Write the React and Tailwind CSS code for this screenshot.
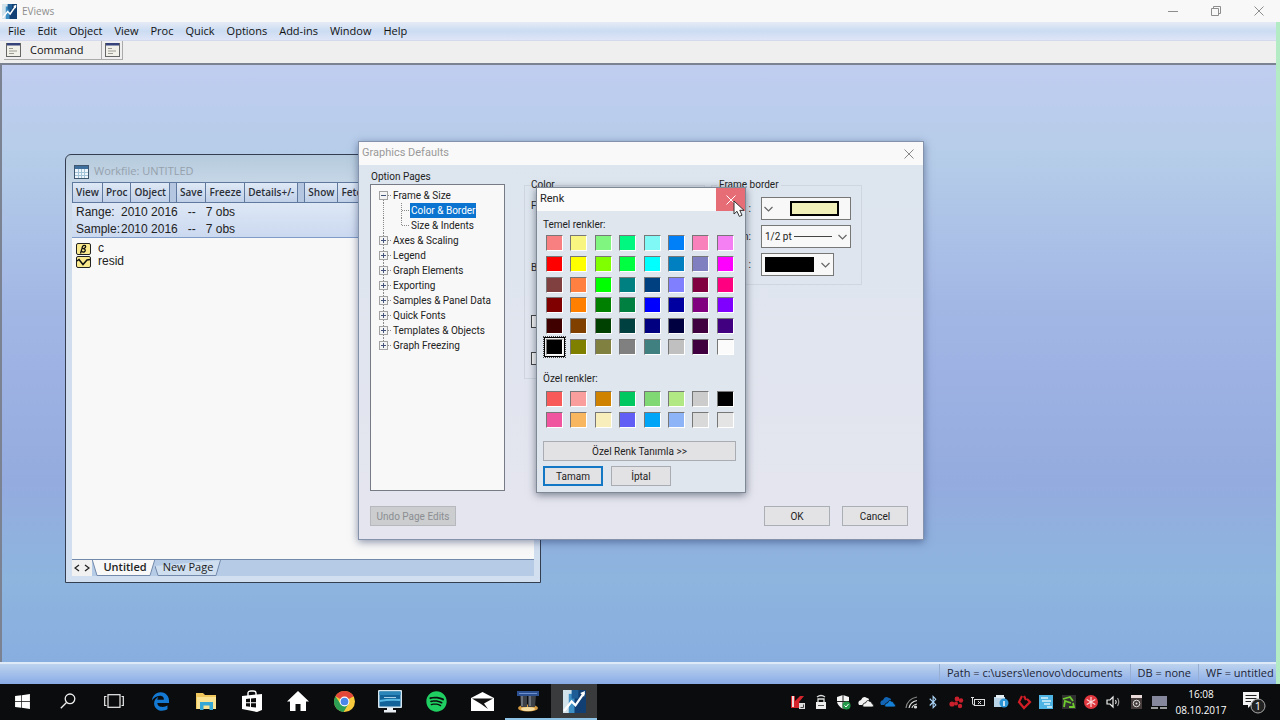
import React, { useState } from 'react';
import { FaWindows, FaEdgeLegacy, FaSpotify, FaBluetoothB } from 'react-icons/fa6';

const MENU = ['File', 'Edit', 'Object', 'View', 'Proc', 'Quick', 'Options', 'Add-ins', 'Window', 'Help'];

const TOOLBAR = [
  ['View', 'Proc', 'Object'],
  ['Save', 'Freeze', 'Details+/-'],
  ['Show', 'Fetch'],
];

const PAGES = [
  { label: 'Frame & Size', open: true, children: ['Color & Border', 'Size & Indents'] },
  { label: 'Axes & Scaling' },
  { label: 'Legend' },
  { label: 'Graph Elements' },
  { label: 'Exporting' },
  { label: 'Samples & Panel Data' },
  { label: 'Quick Fonts' },
  { label: 'Templates & Objects' },
  { label: 'Graph Freezing' },
];

const BASIC_COLORS = [
  '#f98080', '#f8f680', '#80f680', '#00f780', '#80f8f6', '#0080f8', '#f880bb', '#f480f4',
  '#ff0000', '#ffff00', '#80ff00', '#00ff40', '#00ffff', '#0080c0', '#8080c0', '#ff00ff',
  '#804040', '#ff8040', '#00ff00', '#008080', '#004080', '#8080ff', '#800040', '#ff0080',
  '#800000', '#ff8000', '#008000', '#008040', '#0000ff', '#0000a0', '#800080', '#8000ff',
  '#400000', '#804000', '#004000', '#004040', '#000080', '#000040', '#400040', '#400080',
  '#000000', '#808000', '#808040', '#808080', '#408080', '#c0c0c0', '#400040', '#fbfbfb',
];

const CUSTOM_COLORS = [
  '#f85a5a', '#f99d9d', '#cf8100', '#00c860', '#7fd874', '#b2e884', '#cccccc', '#000000',
  '#f0559f', '#f8b75e', '#f8eebb', '#605ef5', '#00a5f8', '#8db4f6', '#d9d9d9', '#e4e4e4',
];

function EViewsLogo({ size }) {
  return (
    <svg width={size} height={size} viewBox="0 0 24 24">
      <rect width="24" height="24" fill="#d3e3ec" />
      <rect x="6" y="4" width="8" height="20" fill="#3d8fc4" />
      <rect x="12" width="12" height="24" fill="#123f73" />
      <rect x="9" y="0" width="7" height="9" fill="#1d5c94" />
      <path d="M1 22 L9 12 L13 16 L22 3" fill="none" stroke="#fff" strokeWidth="2.4" />
      <path d="M18 3 L23 1 L22 7 Z" fill="#fff" />
    </svg>
  );
}

function CloseIcon({ className }) {
  return (
    <svg className={className} width="10" height="10" viewBox="0 0 10 10" fill="none" stroke="currentColor">
      <path d="M0.5 0.5 L9.5 9.5 M9.5 0.5 L0.5 9.5" />
    </svg>
  );
}

function CommandIcon() {
  return (
    <svg width="15" height="14" viewBox="0 0 15 14">
      <rect x="0.5" y="0.5" width="14" height="13" fill="#f1f1ea" stroke="#666" />
      <rect x="1" y="0" width="13" height="2.5" fill="#35437a" />
      <path d="M3 5.5 H7 M3 8 H11 M3 10.5 H8" stroke="#9c9c94" />
    </svg>
  );
}

function TitleBar() {
  return (
    <header className="flex h-[22px] items-center justify-between bg-[#f8f8f8] pl-[2px] text-[#8d8d8d]">
      <div className="flex items-center gap-[5px]">
        <EViewsLogo size={15} />
        <h1 className="text-[10px]">EViews</h1>
      </div>
      <div className="flex">
        <button aria-label="Minimize" className="grid w-[43px] place-items-center">
          <svg width="10" height="10" viewBox="0 0 10 10" stroke="currentColor"><path d="M0 5.5 H10" /></svg>
        </button>
        <button aria-label="Restore" className="grid w-[43px] place-items-center">
          <svg width="10" height="10" viewBox="0 0 10 10" fill="none" stroke="currentColor">
            <path d="M0.5 2.5 H7.5 V9.5 H0.5 Z M2.5 2.5 V0.5 H9.5 V7.5 H7.5" />
          </svg>
        </button>
        <button aria-label="Close" className="grid w-[43px] place-items-center"><CloseIcon /></button>
      </div>
    </header>
  );
}

function ItemIcon({ kind }) {
  return (
    <svg width="15" height="12" viewBox="0 0 15 12">
      <rect x="0.5" y="0.5" width="14" height="11" rx="1.5" fill="#fbe98e" stroke="#222" />
      {kind === 'coef' ? (
        <path d="M4.5 10.5 L6.5 3.5 Q7.5 2 9.3 2.6 Q10.5 4.8 7.5 5.6 Q10.5 6.6 8.6 8.6 Q7 9.6 5.8 8.4" fill="none" stroke="#111" strokeWidth="1.3" />
      ) : (
        <path d="M1 5 L3 3.5 L7 8.5 L11 4 L14 3.5" fill="none" stroke="#111" strokeWidth="1.5" />
      )}
    </svg>
  );
}

function Workfile() {
  return (
    <section className="absolute top-[90px] left-[65px] flex h-[429px] w-[476px] flex-col rounded-t-[6px] border border-[#333f50] bg-[#d0ddf0] bg-linear-to-b from-[#b5cbdd] via-[#cfdcec] via-10% to-[#d2dff1] px-[6px] pb-[6px]">
      <header className="flex h-[27px] items-center gap-[5px] px-[2px] pt-[6px]">
        <svg width="15" height="14" viewBox="0 0 15 14">
          <rect x="0.5" y="0.5" width="14" height="13" fill="#eef6fb" stroke="#3f5870" />
          <rect x="1" y="1" width="13" height="3" fill="#3f6f9c" />
          <path d="M4.5 4 V13 M7.5 4 V13 M10.5 4 V13 M1 7.5 H14 M1 10.5 H14" stroke="#a3c3d9" />
        </svg>
        <h2 className="text-[11px] text-[#96a1ac]">Workfile: UNTITLED</h2>
      </header>
      <div className="flex h-[21px] gap-[6px] overflow-hidden border-y border-[#5f789e] bg-[#b4c6e0]">
        {TOOLBAR.map((group) => (
          <div key={group[0]} className="flex divide-x divide-[#5f789e] border-x border-[#5f789e] bg-linear-to-b from-[#dfe9f6] to-[#c0d0e8]">
            {group.map((name) => (
              <button key={name} className="px-[3px] text-[10px] font-semibold text-[#2b2f38]">{name}</button>
            ))}
          </div>
        ))}
      </div>
      <dl className="grid h-[35px] grid-cols-[45px_1fr] border-b border-[#7f9cc8] bg-linear-to-b from-[#dde7f5] to-[#cbd9f0] pt-px pl-1 font-['Liberation_Sans',sans-serif] text-[12px] leading-[16px] whitespace-pre text-[#222]">
        <dt>Range:</dt>
        <dd>2010 2016   --   7 obs</dd>
        <dt>Sample:</dt>
        <dd>2010 2016   --   7 obs</dd>
      </dl>
      <ul className="flex-1 bg-[#f8f8f8] pt-[4px] pl-1 font-['Liberation_Sans',sans-serif] text-[12px] leading-[13px] text-[#222]">
        <li className="flex items-center gap-[7px]"><ItemIcon kind="coef" />c</li>
        <li className="flex items-center gap-[7px]"><ItemIcon kind="series" />resid</li>
      </ul>
      <nav className="flex h-[17px] border-t border-[#7389ab] bg-[#b6cce6] text-[11px] leading-[14px] text-[#222]">
        <div className="flex w-[20px] items-center justify-around bg-[#f1f1f1]">
          <button aria-label="Previous page">
            <svg width="6" height="8" viewBox="0 0 6 8" fill="none" stroke="#222" strokeWidth="1.3"><path d="M5 1 L1 4 L5 7" /></svg>
          </button>
          <button aria-label="Next page">
            <svg width="6" height="8" viewBox="0 0 6 8" fill="none" stroke="#222" strokeWidth="1.3"><path d="M1 1 L5 4 L1 7" /></svg>
          </button>
        </div>
        <button className="relative w-[63px] pl-[3px] pb-[2px] font-semibold">
          <svg className="absolute inset-0 h-full w-full" viewBox="0 0 63 16" preserveAspectRatio="none">
            <path d="M0 -1 L5 15.5 H58 L63 -1" fill="#f8f8f8" stroke="#7389ab" />
          </svg>
          <span className="relative">Untitled</span>
        </button>
        <button className="relative w-[66px] pb-[2px]">
          <svg className="absolute inset-0 h-full w-full" viewBox="0 0 66 16" preserveAspectRatio="none">
            <path d="M0 6 L3 15.5 H61 L65.5 0" fill="#cfdff0" stroke="#7389ab" />
          </svg>
          <span className="relative">New Page</span>
        </button>
      </nav>
    </section>
  );
}

function TreeToggle({ open, first, last }) {
  return (
    <svg width="17" height="15" viewBox="0 0 17 15" fill="none">
      <path d={first ? 'M7.5 8 V15' : last ? 'M7.5 0 V8' : 'M7.5 0 V15'} stroke="#8a8a8a" strokeDasharray="1 1" />
      <path d="M12 7.5 H16" stroke="#8a8a8a" strokeDasharray="1 1" />
      <rect x="3.5" y="3.5" width="8" height="8" fill="#f4f4f4" stroke="#a2a2a2" />
      <path d={open ? 'M5 7.5 H10' : 'M5 7.5 H10 M7.5 5 V10'} stroke="#44537a" />
    </svg>
  );
}

function PageTree({ page, onSelect }) {
  return (
    <ul className="h-[307px] border border-[#767b85] bg-[#f8f8f8] pt-[3px] pl-[5px] text-[10px] leading-[15px] whitespace-nowrap">
      {PAGES.map((item, i) => (
        <li key={item.label}>
          <button className="flex h-[15px] items-center">
            <TreeToggle open={item.open} first={i === 0} last={i === PAGES.length - 1} />
            {item.label}
          </button>
          {item.children && (
            <ul>
              {item.children.map((child, n) => (
                <li key={child}>
                  <button className="flex h-[15px] items-center" onClick={() => onSelect(child)}>
                    <svg width="34" height="15" viewBox="0 0 34 15" stroke="#8a8a8a" strokeDasharray="1 1">
                      <path d="M7.5 0 V15" />
                      <path d={n === 0 ? 'M25.5 0 V15' : 'M25.5 0 V8'} />
                      <path d="M26 7.5 H33" />
                    </svg>
                    <span className={child === page ? 'bg-[#0a74d0] px-px text-white' : 'px-px'}>{child}</span>
                  </button>
                </li>
              ))}
            </ul>
          )}
        </li>
      ))}
    </ul>
  );
}

function Chevron() {
  return (
    <svg width="9" height="6" viewBox="0 0 9 6" fill="none" stroke="#666" strokeWidth="1.2">
      <path d="M0.5 1 L4.5 5 L8.5 1" />
    </svg>
  );
}

const combo = "h-full w-full appearance-none border border-[#777] bg-[#f8f8f8] pl-[3px] font-['Roboto',sans-serif] text-[10px]";
const overlay = 'pointer-events-none absolute inset-0 flex items-center';

function FrameBorder() {
  return (
    <fieldset className="h-[106px] w-[151px] border border-[#cfd6df]">
      <legend className="ml-[5px] px-[2px] leading-[12px]">Frame border</legend>
      <div className="grid grid-cols-[39px_1fr] items-center gap-x-[10px] gap-y-[5px] pt-[6px] text-right">
        <label htmlFor="border-type">:</label>
        <div className="relative h-[23px] w-[90px]">
          <select id="border-type" aria-label="Border type" className={combo}><option></option></select>
          <div className={overlay + ' justify-between pr-[12px] pl-[3px]'}>
            <Chevron />
            <span className="h-[15px] w-[49px] border-2 border-black bg-[#f0efba]" />
          </div>
        </div>
        <label htmlFor="border-width">n:</label>
        <div className="relative h-[23px] w-[90px]">
          <select id="border-width" className={combo}><option>1/2 pt</option></select>
          <div className={overlay + ' justify-end gap-[6px] pr-[4px]'}>
            <span className="h-px w-[38px] bg-[#444]" />
            <Chevron />
          </div>
        </div>
        <label htmlFor="border-color">:</label>
        <div className="relative h-[23px] w-[73px]">
          <select id="border-color" aria-label="Border color" className={combo}><option></option></select>
          <div className={overlay + ' justify-between pr-[4px] pl-[4px]'}>
            <span className="h-[15px] w-[49px] bg-black" />
            <Chevron />
          </div>
        </div>
      </div>
    </fieldset>
  );
}

function GraphicsDefaults() {
  const [page, setPage] = useState('Color & Border');
  return (
    <section className="absolute top-[77px] left-[358px] flex h-[399px] w-[566px] flex-col border border-[#8492ab] bg-linear-to-b from-[#dce5ee] to-[#e5e5ef] font-['Roboto',sans-serif] text-[10px] text-[#222] shadow-[0_2px_8px_rgba(30,45,90,0.5)]">
      <header className="flex h-[23px] items-center justify-between bg-[#f9f9f9] pr-[9px] pl-[3px]">
        <h2 className="text-[11px] text-[#999]">Graphics Defaults</h2>
        <button aria-label="Close" className="text-[#888]"><CloseIcon /></button>
      </header>
      <div className="flex flex-1 pl-[11px]">
        <div className="w-[135px] pt-[5px]">
          <h3 className="h-[14px] pl-px leading-[14px]">Option Pages</h3>
          <PageTree page={page} onSelect={setPage} />
        </div>
        <div className="ml-[19px] flex gap-[6px] pt-[14px]">
          <fieldset className="h-[200px] w-[181px] border border-[#cfd6df] pl-[6px]">
            <legend className="leading-[12px]">Color</legend>
            <div className="flex flex-col items-start">
              <span className="pt-[7px]">F</span>
              <span className="pt-[47px]">B</span>
              <input type="checkbox" aria-label="Fade" defaultChecked className="mt-[40px] h-[13px] w-[13px] appearance-none border border-[#444] bg-[#f8f8f8]" />
              <input type="checkbox" aria-label="Apply" className="mt-[24px] h-[13px] w-[13px] appearance-none border border-[#444] bg-[#f8f8f8]" />
            </div>
          </fieldset>
          <FrameBorder />
        </div>
      </div>
      <footer className="flex items-center gap-[12px] pr-[15px] pb-[13px] pl-[11px]">
        <button disabled className="mr-auto h-[20px] w-[86px] border border-[#b5b8bc] bg-[#cbcdcf] text-[#8b8e92]">Undo Page Edits</button>
        <button className="h-[20px] w-[66px] border border-[#aaaeb5] bg-[#e3e3e5]">OK</button>
        <button className="h-[20px] w-[66px] border border-[#aaaeb5] bg-[#e3e3e5]">Cancel</button>
      </footer>
    </section>
  );
}

function Swatch({ color, selected }) {
  return (
    <button
      aria-label={color}
      className={
        'h-[16px] w-[17px] border border-t-[#777] border-r-white border-b-white border-l-[#777] ' +
        (selected ? 'shadow-[0_0_0_1px_#eee,0_0_0_2px_#000] outline-1 outline-offset-2 outline-dotted outline-[#444]' : '')
      }
      style={{ backgroundColor: color }}
    />
  );
}

function ColorDialog() {
  return (
    <section className="absolute top-[123px] left-[536px] w-[210px] border border-[#7f8895] bg-[#dfe6ee] font-['Roboto',sans-serif] text-[10px] text-[#222] shadow-[0_2px_8px_rgba(30,40,60,0.55)]">
      <header className="flex h-[23px] items-center justify-between bg-[#fbfbfb] pl-[3px]">
        <h2 className="text-[11px]">Renk</h2>
        <button aria-label="Close" className="grid h-full w-[29px] place-items-center bg-[#e66c76] text-white"><CloseIcon /></button>
      </header>
      <div className="px-[6px] pb-[6px]">
        <h3 className="pt-[8px] leading-[12px]">Temel renkler:</h3>
        <div className="mt-px ml-[3px] grid h-[125px] w-[195px] grid-cols-8 items-center pt-px">
          {BASIC_COLORS.map((color, i) => <Swatch key={i} color={color} selected={i === 40} />)}
        </div>
        <h3 className="pt-[16px] leading-[12px]">Özel renkler:</h3>
        <div className="mt-[3px] ml-[3px] grid h-[42px] w-[195px] grid-cols-8 items-center">
          {CUSTOM_COLORS.map((color, i) => <Swatch key={i} color={color} />)}
        </div>
        <button className="mt-[11px] h-[20px] w-[193px] border border-[#a9adb3] bg-[#e2e1e4]">Özel Renk Tanımla &gt;&gt;</button>
        <div className="mt-[5px] flex gap-[8px]">
          <button className="h-[20px] w-[60px] border-2 border-[#1277c4] bg-[#e2e1e4]">Tamam</button>
          <button className="h-[20px] w-[60px] border border-[#a9adb3] bg-[#e2e1e4]">İptal</button>
        </div>
      </div>
    </section>
  );
}

function Cursor() {
  return (
    <svg className="absolute top-[136px] left-[733px]" width="13" height="18" viewBox="0 0 13 18">
      <path d="M1 1 V14 L4 11.3 L6.3 16.4 L9 15.2 L6.8 10.3 H11 Z" fill="#fff" stroke="#333" />
    </svg>
  );
}

const Search = () => (
  <svg width="16" height="16" viewBox="0 0 16 16" fill="none" stroke="#eee" strokeWidth="1.3">
    <circle cx="10" cy="5.8" r="4.8" /><path d="M6.5 9.5 L0.8 15.2" />
  </svg>
);
const TaskView = () => (
  <svg width="20" height="14" viewBox="0 0 20 14" fill="none" stroke="#eee" strokeWidth="1.2">
    <rect x="4" y="0.7" width="12" height="12.6" /><path d="M2.5 2.5 H0.7 V11.5 H2.5 M17.5 2.5 H19.3 V11.5 H17.5" />
  </svg>
);
const Explorer = () => (
  <svg width="20" height="18" viewBox="0 0 20 18">
    <path d="M0 1 H7 L9 3 H20 V17 H0 Z" fill="#f0c75c" /><path d="M1 5 H20 V17 H1 Z" fill="#fbe394" />
    <path d="M4 18 V10 H17 V18 H13.5 V13.5 H7.5 V18 Z" fill="#35a8d6" />
  </svg>
);
const Store = () => (
  <svg width="20" height="22" viewBox="0 0 20 22">
    <path d="M6 6 V3 Q6 1 9 1 H11 Q14 1 14 3 V5" fill="none" stroke="#fff" strokeWidth="1.4" />
    <path d="M0 6 L20 4 V20 L15 22 L0 19 Z" fill="#fff" />
    <path d="M4 9 L8 8.6 V12.2 H4 Z M9 8.5 L14 8 V12.2 H9 Z M4 13.2 H8 V16.8 L4 16.3 Z M9 13.2 H14 V17.6 L9 17 Z" fill="#0b0b0b" />
  </svg>
);
const Home = () => (
  <svg width="22" height="20" viewBox="0 0 22 20"><path d="M11 0 L22 10.5 H19 V20 H13.5 V13 H8.5 V20 H3 V10.5 H0 Z" fill="#fff" /></svg>
);
const Chrome = () => (
  <svg width="21" height="21" viewBox="0 0 24 24">
    <circle cx="12" cy="12" r="12" fill="#f7cb3b" />
    <path d="M12 12 L1.6 6 A12 12 0 0 1 22.4 6 Z" fill="#e2483a" />
    <path d="M1.6 6 A12 12 0 0 0 11 24 L16.5 14.5 L7 14 Z" fill="#2c9f55" />
    <path d="M12 6.2 H22.5 L22.4 6 L12 4 Z" fill="#e2483a" />
    <circle cx="12" cy="12" r="5.6" fill="#fff" /><circle cx="12" cy="12" r="4.4" fill="#4b87e8" />
  </svg>
);
const Monitor = () => (
  <svg width="24" height="23" viewBox="0 0 24 23">
    <rect width="24" height="18" rx="1" fill="#d7e7f0" /><rect x="1.5" y="1.5" width="21" height="15" fill="#116298" />
    <path d="M1.5 1.5 H22.5 V5 H1.5 Z" fill="#2a86b8" /><path d="M1.5 10 Q12 8 22.5 9 V11 Q12 10 1.5 12 Z" fill="#58b9e4" />
    <path d="M6 7.5 H18" stroke="#a9cfe4" /><path d="M9 18 H15 V20 H18 V22.5 H6 V20 H9 Z" fill="#e8eef2" />
  </svg>
);
const Mail = () => (
  <svg width="23" height="19" viewBox="0 0 23 19">
    <path d="M0 6 L11.5 0 L23 6 V19 H0 Z" fill="#fff" />
    <path d="M1 6.5 H22 L13 11.5 L17 17 L10 12 Z" fill="#111" />
  </svg>
);
const Game = () => (
  <svg width="22" height="21" viewBox="0 0 22 21">
    <ellipse cx="11" cy="17" rx="10" ry="3.6" fill="#d79b41" /><ellipse cx="11" cy="18" rx="7" ry="2" fill="#f5dca0" />
    <path d="M3 4 H10 V16 H4 Z M11 4 H19 L18 16 H11 Z" fill="#3c4047" /><path d="M5 5 V15 M13 5 V15" stroke="#8d939b" strokeWidth="1.2" />
    <rect x="0" y="0" width="22" height="5" fill="#2c4f8f" /><path d="M2 2.5 H20" stroke="#6f92cf" />
  </svg>
);

const APPS = [
  { name: 'Start', icon: <FaWindows size={17} color="#fff" /> },
  { name: 'Search', icon: <Search /> },
  { name: 'Task view', icon: <TaskView /> },
  { name: 'Edge', icon: <FaEdgeLegacy size={19} color="#1479d2" /> },
  { name: 'File Explorer', icon: <Explorer /> },
  { name: 'Store', icon: <Store /> },
  { name: 'Home', icon: <Home /> },
  { name: 'Chrome', icon: <Chrome /> },
  { name: 'Computer', icon: <Monitor /> },
  { name: 'Spotify', icon: <FaSpotify size={21} color="#1fcf61" /> },
  { name: 'Mail', icon: <Mail /> },
  { name: 'Recorder', icon: <Game />, state: 'border-[#8fc3e6]' },
  { name: 'EViews', icon: <EViewsLogo size={23} />, state: 'border-[#8fc3e6] bg-[#3a3b3c]' },
];

// notification area glyphs, all drawn on a 16x16 box
const TRAY = [
  <><path d="M1 2 H5 V7 L10 2 H14 L9 8 L13 14 H1 Z" fill="#d6242c" /><path d="M2 2 H4 V13 H2 Z" fill="#f3dada" /><rect x="9" y="9" width="6" height="6" fill="#ddd" /><path d="M10.5 13.5 H13.5 V10.5" stroke="#444" fill="none" /></>,
  <><rect x="3" y="8" width="10" height="7" fill="#eee" /><path d="M5 8 V5 H11 V8 M4 3 Q8 0 12 3" fill="none" stroke="#ddd" strokeWidth="1.3" /><path d="M5 11.5 H11" stroke="#555" /></>,
  <><path d="M2 3 L8 1 L14 3 V8 Q13 12 8 15 Q3 12 2 8 Z" fill="#f4f4f4" /><path d="M8 1 V15 M2 7.5 H14" stroke="#222" /><circle cx="11.5" cy="11.5" r="4" fill="#22994a" /><path d="M9.5 11.5 L11 13 L13.5 10" stroke="#fff" fill="none" /></>,
  <><path d="M1 11 Q-1 7 3 6 Q5 1 9 4 Q11 4 11 6 L6 11 Z" fill="#f2f2f2" /><path d="M5 13 Q4 9 7.5 9 Q9 5 12 7.5 Q14 7.5 14 9.5 Q16.5 11 15 13 Z" fill="#f2f2f2" stroke="#0b0c0d" strokeWidth="0.8" /></>,
  <><path d="M1 11 Q-1 7 3 6 Q5 1 9 4 Q11 4 11 6 L6 11 Z" fill="#1264b4" /><path d="M5 13 Q4 9 7.5 9 Q9 5 12 7.5 Q14 7.5 14 9.5 Q16.5 11 15 13 Z" fill="#1580d8" stroke="#0b0c0d" strokeWidth="0.8" /></>,
  <g fill="none" stroke="#ddd" strokeWidth="1.2"><path d="M3 14 Q4 5 14 3" stroke="#888" /><path d="M6 14 Q7 8 14 6.5" /><path d="M9 14 Q9.5 11 14 10" /><circle cx="12.5" cy="13" r="1" fill="#ddd" /></g>,
  null,
  <g fill="#c8202c"><circle cx="4" cy="10" r="2.6" /><circle cx="9" cy="5" r="2.4" /><circle cx="13" cy="6.5" r="2.2" /><circle cx="12" cy="12" r="2.2" /><circle cx="8" cy="9.5" r="2" /></g>,
  <g fill="none" stroke="#ddd"><rect x="4.5" y="5.5" width="10" height="6" /><path d="M8 7 L11 10 M11 7 L8 10" /><path d="M2.5 3 V8 M1 3.5 H4 M2.5 8 Q2 11 4 11" /></g>,
  <><rect x="1" y="3" width="11" height="10" fill="#b8d4e6" /><rect x="3" y="1" width="8" height="3" fill="#e2edf4" /><circle cx="11" cy="9" r="4.5" fill="#2c95d8" /><path d="M11 7 V12" stroke="#fff" strokeWidth="1.5" /></>,
  <path d="M6 2 L3 8 L8 14 L14 8 L11 5 M8 2 L10 6" fill="none" stroke="#d31d26" strokeWidth="2.2" />,
  <><rect x="1" y="1" width="14" height="14" fill="#4db4e3" /><path d="M3 4 H10 M4 7 H13 M6 10 H12 M9 13 H14" stroke="#d9f1fb" strokeWidth="1.5" /></>,
  <><rect x="1" y="1" width="14" height="14" fill="#303030" /><path d="M2 5 L9 3 L12 7 M3 13 L4 7 L10 9 M8 13 H13 L12 9" fill="none" stroke="#6ecb2e" strokeWidth="1.8" /></>,
  <><circle cx="8" cy="8" r="7" fill="#e0383e" /><path d="M8 3 V13 M3.7 5.5 L12.3 10.5 M12.3 5.5 L3.7 10.5" stroke="#fbdada" strokeWidth="1.2" /></>,
  <g fill="none" stroke="#eee" strokeWidth="1.2"><path d="M1 6 H4 L7 3 V13 L4 10 H1 Z" /><path d="M9.5 6 Q11 8 9.5 10" /><path d="M11.5 4 Q14 8 11.5 12" stroke="#999" /></g>,
  <><rect x="3" y="1" width="11" height="3" fill="#eadada" /><rect x="3" y="4" width="11" height="11" fill="#463c3c" /><circle cx="8.5" cy="9.5" r="3.3" fill="none" stroke="#ddd" /><circle cx="8.5" cy="9.5" r="1" fill="#ddd" /></>,
  <><rect x="1" y="2" width="15" height="10" fill="#85889c" /><path d="M0 14 H7 M9 14 H16" stroke="#ccc" strokeWidth="1.5" /></>,
];

function Taskbar() {
  return (
    <footer className="flex h-[36px] bg-[#0b0c0d] text-white">
      {APPS.map(({ name, icon, state }) => (
        <button key={name} aria-label={name} className={'grid w-[46px] shrink-0 place-items-center border-b-2 first:w-[45px] ' + (state || 'border-transparent')}>
          {icon}
        </button>
      ))}
      <div className="ml-auto grid w-[383px] grid-cols-[repeat(17,1fr)] place-items-center">
        {TRAY.map((glyph, i) => (
          glyph
            ? <svg key={i} width="16" height="16" viewBox="0 0 16 16">{glyph}</svg>
            : <FaBluetoothB key={i} size={14} color="#a9d2f5" />
        ))}
      </div>
      <div className="w-[62px] text-center text-[10px] leading-[16px]">
        <p className="pt-[2px]">16:08</p>
        <p>08.10.2017</p>
      </div>
      <button aria-label="Notifications" className="grid w-[48px] place-items-center pr-[4px]">
        <svg width="24" height="24" viewBox="0 0 24 24">
          <path d="M1 2 H17 V15 H9 L6 18 V15 H1 Z" fill="#f4f4f4" />
          <path d="M3.5 5.5 H14.5 M3.5 8.5 H14.5 M3.5 11.5 H9" stroke="#222" />
          <circle cx="16" cy="16" r="7" fill="#222" stroke="#aaa" />
          <text x="16" y="20" textAnchor="middle" fontSize="11" fill="#fff">1</text>
        </svg>
      </button>
    </footer>
  );
}

function App() {
  return (
    <div className="flex min-h-screen flex-col overflow-hidden bg-[#0b0c0d] font-['Open_Sans',sans-serif] text-[#222]">
      <TitleBar />
      <div className="flex flex-1 flex-col border-r-4 border-[#b3ecc4]">
        <nav className="flex h-[19px] items-center gap-[12px] border-b border-[#d5d9ee] bg-linear-to-b from-[#e6ebf6] via-[#cbdcf2] to-[#dfe5f7] px-2 text-[11px] text-[#111]">
          {MENU.map((name) => <button key={name}>{name}</button>)}
        </nav>
        <div className="flex h-[22px] items-start bg-[#efefef] pl-[4px] text-[11px] text-[#111]">
          <button className="flex h-[19px] w-[98px] items-center gap-[9px] border-r border-b border-[#aaa] pl-[2px]">
            <CommandIcon />
            Command
          </button>
          <button aria-label="Capture" className="grid h-[19px] w-[21px] place-items-center border-r border-b border-[#aaa]">
            <CommandIcon />
          </button>
        </div>
        <main className="flex-1 border-t-2 border-l-2 border-[#7b8393] bg-[linear-gradient(#c0cdf0,#b6cde9_15%,#a3b7e5_40%,#94abdf_70%,#8db5de_86%,#88aee0)]" />
        <div className="flex h-[22px] justify-end border-t-2 border-[#dfeaf8] bg-linear-to-b from-[#bdd3ee] to-[#89abe6] text-[11px] leading-[18px] whitespace-nowrap text-[#1c2436]">
          <span className="border-l border-[#96aed4] px-[7px]">Path = c:\users\lenovo\documents</span>
          <span className="border-l border-[#96aed4] px-[7px]">DB = none</span>
          <span className="w-[78px] overflow-hidden border-l border-[#96aed4] pl-[7px]">WF = untitled</span>
        </div>
      </div>
      <Taskbar />
      <div className="absolute top-[64px] left-0">
        <Workfile />
        <GraphicsDefaults />
        <ColorDialog />
        <Cursor />
      </div>
    </div>
  );
}

export default App;
